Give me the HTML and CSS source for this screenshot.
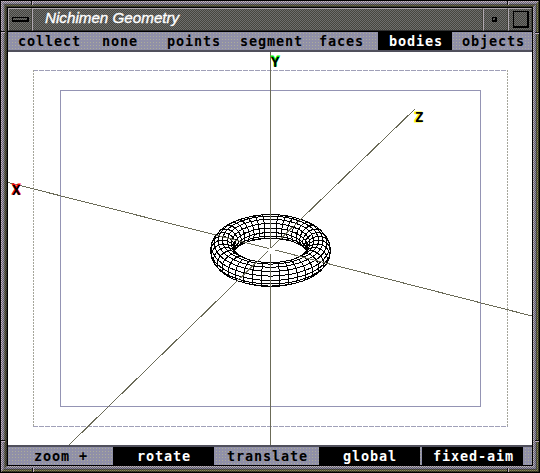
FILE: index.html
```
<!DOCTYPE html>
<html lang="en">
<head>
<meta charset="utf-8">
<title>Nichimen Geometry</title>
<link rel="stylesheet" href="styles.css">
</head>
<body>
<div class="ring r0"><div class="ring r1"><div class="ring r2"><div class="ring r3"><div class="ring r4"><div class="ring r5"><div class="ring r6"><div class="ring r7">
<main class="window">
  <header class="title-bar">
    <div class="button menu-button"><i class="dash"></i></div>
    <h1 class="title"><span>Nichimen Geometry</span></h1>
    <div class="button min-button"><i class="dot"></i></div>
    <div class="button max-button"><i class="square"></i></div>
  </header>
  <nav class="bar modes">
    <span class="item collect">collect</span>
    <span class="item none">none</span>
    <span class="item points">points</span>
    <span class="item segment">segment</span>
    <span class="item faces">faces</span>
    <span class="item bodies on">bodies</span>
    <span class="item objects">objects</span>
  </nav>
  <svg class="view" width="524" height="397" viewBox="8 50 524 397">
    <path class="edge" d="M8 51H532M8 446H532"/>
    <path class="safe-h" d="M33 70.5H508M33 426.5H508"/>
    <path class="safe-v" d="M33.5 70V427M507.5 70V427"/>
    <path class="inner" d="M60.5 90.5H480.5V406.5H60.5Z"/>
    <g id="torus"></g>
    <path class="axis" d="M270.5 52V248M270.5 254V445"/>
    <path class="axis" d="M8 182.5L269 248.5M275 250L532 316M415.5 108.5L271.5 247.5M268 251L69 445"/>
    <g class="label">
      <text class="red" x="12" y="194">X</text><text x="12" y="195">X</text>
      <text class="green" x="271" y="66">Y</text><text x="271" y="67">Y</text>
      <text class="yellow" x="414" y="122">Z</text><text x="415" y="122">Z</text>
    </g>
  </svg>
  <footer class="bar tools">
    <span class="item zoom">zoom +</span>
    <span class="item rotate on">rotate</span>
    <span class="item translate">translate</span>
    <span class="item global on">global</span>
    <span class="item fixed on">fixed-aim</span>
  </footer>
</main>
</div></div></div></div></div></div></div></div>
<i class="dither"></i>
<i class="notch v n1"></i><i class="notch v n2"></i><i class="notch v n3"></i><i class="notch v n4"></i>
<i class="notch h n5"></i><i class="notch h n6"></i><i class="notch h n7"></i><i class="notch h n8"></i>
<script src="torus.js"></script>
</body>
</html>
```
FILE: styles.css
```
* { box-sizing: border-box; }
body { margin: 0; width: 540px; height: 473px; overflow: hidden; background: #000; position: relative; }

.ring { height: 100%; border: 1px solid; }
.r0 { height: 473px; border-color: #000; }
.r1 { border-color: #c8b8c8 #44442f #44442f #c8b8c8; }
.r2 { border-color: #b0a4b8 #8a8a58 #8a8a58 #b0a4b8; }
.r3 { border-color: #9898a8 #5c5c48 #5c5c48 #9898a8; }
.r4 { border-color: #625c60 #8c86a4 #8c86a4 #78726c; }
.r5 { border-color: #74744c #a4a4b0 #a4a4b0 #5c5c40; }
.r6 { border-color: #44443a #c0b4c0 #c0b4c0 #44443a; }
.r7 { border-color: #000; }

/* Checker texture over the frame only */
.dither {
  position: absolute; inset: 0;
  background: repeating-conic-gradient(rgba(0, 0, 0, .38) 0 25%, transparent 0 50%) 0 0 / 2px 2px;
  clip-path: polygon(evenodd, 0 0, 540px 0, 540px 473px, 0 473px, 0 0, 8px 8px, 532px 8px, 532px 465px, 8px 465px, 8px 8px);
}

.window { height: 457px; display: flex; flex-direction: column; background: #fff; }

.title-bar {
  display: flex; height: 24px; flex: none; border-bottom: 1px solid #000;
  background: repeating-conic-gradient(#46463e 0 25%, #6e6e6e 0 50%) 0 0 / 2px 2px;
}
.button, .title { border: 1px solid; border-color: #b0a8b0 #45453c #303030 #b0a8b0; }
.menu-button { width: 24px; padding: 8px 0 0 3px; }
.dash { display: block; width: 17px; height: 5px; border: 1px solid #000; border-right-width: 2px; border-bottom-width: 2px; }
.title {
  flex: 1; margin: 0; padding-left: 12px; color: #fff; white-space: nowrap;
  font: italic 400 15.2px/17px "Liberation Sans", sans-serif; -webkit-text-stroke: 0.35px #fff;
}
.min-button { width: 25px; padding: 8px 0 0 8px; }
.dot { display: block; width: 5px; height: 5px; border: 1px solid #000; border-right-width: 2px; border-bottom-width: 2px; }
.max-button { width: 24px; padding: 2px 0 0 4px; }
.square { display: block; width: 16px; height: 17px; border: 1px solid #000; border-right-width: 2px; border-bottom-width: 2px; }

.bar {
  display: flex; height: 18px; flex: none; color: #000;
  background-color: #9090a8;
  background-image: radial-gradient(circle, #acac98 0.8px, transparent 0.9px);
  background-size: 3px 3px;
  font: bold 13.5px/19px "DejaVu Sans Mono", monospace; letter-spacing: 0.87px;
}
.item { display: block; white-space: pre; height: 18px; }
.on { background: #000; color: #fff; }
.collect { width: 84px; padding-left: 10px; }
.none { width: 65px; padding-left: 10px; }
.points { width: 73px; padding-left: 10px; }
.segment { width: 79px; padding-left: 10px; }
.faces { width: 69px; padding-left: 10px; }
.bodies { width: 74px; padding-left: 11px; }
.objects { padding-left: 10px; }
.zoom { width: 105px; padding-left: 26px; }
.rotate { width: 101px; padding-left: 24px; }
.translate { width: 105px; padding-left: 13px; }
.global { width: 101px; padding-left: 24px; }
.fixed { width: 101px; margin-left: 2px; padding-left: 11px; }

.view { display: block; flex: none; background: #fff; shape-rendering: crispEdges; }
.view path { fill: none; stroke-width: 1; }
.view .edge { stroke: #50505c; stroke-width: 2; }
.safe-h { stroke: #a0a0b8; stroke-dasharray: 5 1; }
.safe-v { stroke: #a5a59a; stroke-dasharray: 2 1; }
.inner { stroke: #9494b4; }
.axis { stroke: #6b6b58; }
#torus polygon { fill: #fff; stroke: #000; stroke-width: 1; }
.label { font: bold 14px "DejaVu Sans Mono", monospace; }
.red { fill: #f00; stroke: #f00; }
.green { fill: #0e0; stroke: #0e0; }
.yellow { fill: #ff0; stroke: #ff0; }

.notch { position: absolute; background: #c0b0c0; }
.v { width: 2px; height: 4px; border-left: 1px solid #111; }
.h { height: 2px; width: 4px; border-top: 1px solid #111; }
.n1 { left: 31px; top: 1px; }
.n2 { left: 507px; top: 1px; }
.n3 { left: 32px; top: 468px; }
.n4 { left: 507px; top: 468px; }
.n5 { left: 1px; top: 31px; }
.n6 { left: 1px; top: 440px; }
.n7 { left: 535px; top: 32px; }
.n8 { left: 535px; top: 440px; }
```
FILE: torus.js
```
// Wireframe torus with hidden surfaces removed by painting back to front.
const CX = 270.5, CY = 250.5, R = 48, r = 12, U = 40, V = 16;
const tilt = Math.PI / 6, s = Math.sin(tilt), c = Math.cos(tilt);

function point(i, j) {
  const u = (i * 2 * Math.PI) / U, v = (j * 2 * Math.PI) / V;
  const d = R + r * Math.cos(v);
  const x = d * Math.cos(u), z = d * Math.sin(u), y = r * Math.sin(v);
  return [CX + x, CY + z * s - y * c, z * c + y * s];
}

const faces = [];
for (let i = 0; i < U; i++) {
  for (let j = 0; j < V; j++) {
    const q = [point(i, j), point(i + 1, j), point(i + 1, j + 1), point(i, j + 1)];
    const area = (q[2][0] - q[0][0]) * (q[3][1] - q[1][1]) - (q[2][1] - q[0][1]) * (q[3][0] - q[1][0]);
    if (area > 0) faces.push({ q, depth: q.reduce((t, p) => t + p[2], 0) });
  }
}
faces.sort((a, b) => a.depth - b.depth);
const group = document.getElementById("torus");
for (const f of faces) {
  const el = document.createElementNS("http://www.w3.org/2000/svg", "polygon");
  el.setAttribute("points", f.q.map(p => p[0].toFixed(1) + "," + p[1].toFixed(1)).join(" "));
  group.appendChild(el);
}
```
